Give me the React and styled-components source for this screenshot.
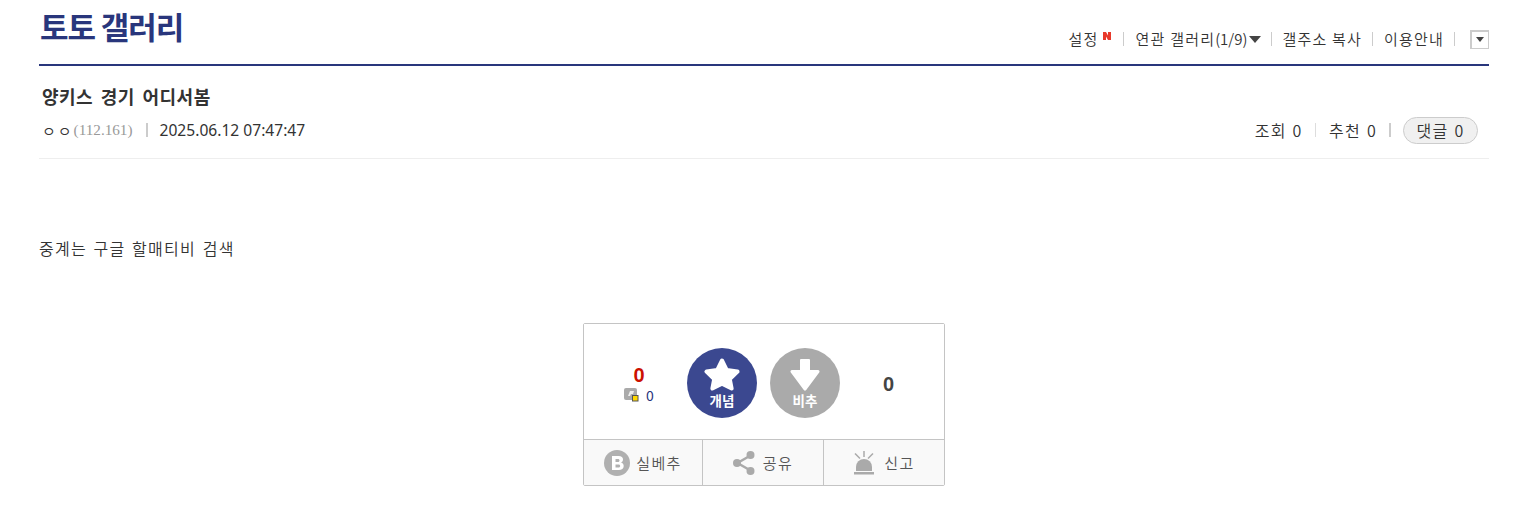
import React from 'react';
import styled, { createGlobalStyle } from 'styled-components';

const GlobalStyle = createGlobalStyle`
  html, body {
    margin: 0;
    padding: 0;
    background: #fff;
    font-family: "Noto Sans CJK KR", "Liberation Sans", sans-serif;
    color: #333;
  }
`;

const Page = styled.div`
  width: 1450px;
  margin-left: 39px;
  height: 532px;
  overflow: hidden;
`;

const Head = styled.header`
  height: 64px;
  border-bottom: 2px solid #29367c;
  display: flex;
  justify-content: space-between;
`;

const GalleryTitle = styled.h2`
  margin: 0;
  padding: 6px 0 0 1px;
  font-size: 31px;
  line-height: 40px;
  font-weight: 700;
  letter-spacing: -1.07px;
  color: #29367c;
`;

const HeadMenu = styled.nav`
  display: flex;
  align-items: center;
  height: 20px;
  margin-top: 29px;
  font-size: 15px;
  font-weight: 350;
  letter-spacing: 1.2px;
  color: #333;
`;

const MenuItem = styled.span`
  display: inline-flex;
  align-items: center;
  line-height: 20px;
  white-space: pre;
`;

const Paren = styled.span`
  font-size: 15px;
  letter-spacing: 0;
`;

const Sep = styled.i`
  display: block;
  width: ${(p) => p.$w || 1}px;
  height: ${(p) => p.$h || 14}px;
  margin: 0 ${(p) => p.$r ?? 11}px 0 ${(p) => p.$l ?? 11}px;
  background: ${(p) => p.$color || '#ccc'};
`;

const Caret = styled.i`
  display: block;
  width: 0;
  height: 0;
  margin-left: 2px;
  border-left: 6px solid transparent;
  border-right: 6px solid transparent;
  border-top: 7px solid #444;
`;

const ToggleBox = styled.button`
  width: 19px;
  height: 19px;
  margin-left: 4px;
  padding: 0;
  display: flex;
  align-items: center;
  justify-content: center;
  background: #fff;
  border: 1px solid #ccc;
  border-width: 2px 1px 1px 2px;
`;

const SmallCaret = styled.i`
  display: block;
  width: 0;
  height: 0;
  border-left: 4px solid transparent;
  border-right: 4px solid transparent;
  border-top: 5px solid #444;
`;

const PostHead = styled.section`
  height: 92px;
  border-bottom: 1px solid #eee;
  padding: 0 11px 0 3px;
`;

const PostTitle = styled.h3`
  margin: 0;
  padding-top: 18px;
  font-size: 18px;
  line-height: 24px;
  font-weight: 700;
  letter-spacing: 0.5px;
  word-spacing: 3px;
  color: #333;
`;

const PostInfo = styled.div`
  display: flex;
  justify-content: space-between;
  align-items: center;
  height: 26px;
  margin-top: 9px;
  font-size: 14px;
`;

const InfoSide = styled.div`
  display: flex;
  align-items: center;
`;

const Writer = styled.span`
  font-size: 15px;
  font-weight: 350;
  letter-spacing: 2px;
  color: #333;
`;

const Ip = styled.span`
  font-family: "Liberation Serif", serif;
  font-size: 15.2px;
  color: #999;
`;

const DateText = styled.span`
  font-family: "Noto Sans", sans-serif;
  font-size: 15.6px;
  color: #333;
`;

const Stat = styled.span`
  font-size: 16px;
  font-weight: 350;
  letter-spacing: 1.28px;
  word-spacing: 1px;
  color: #333;
`;

const CommentPill = styled.span`
  display: inline-flex;
  align-items: center;
  justify-content: center;
  box-sizing: border-box;
  width: 75px;
  height: 27px;
  border: 1px solid #ccc;
  border-radius: 14px;
  background: #f0f0f0;
  font-size: 16px;
  font-weight: 350;
  letter-spacing: 1.28px;
  word-spacing: 1px;
  color: #333;
`;

const Body = styled.p`
  margin: 0;
  padding-top: 77px;
  font-size: 16px;
  font-weight: 350;
  line-height: 24px;
  letter-spacing: 1.28px;
  word-spacing: 1.7px;
  color: #333;
`;

const VoteBox = styled.div`
  box-sizing: border-box;
  width: 362px;
  height: 163px;
  margin: 63px 0 0 544px;
  border: 1px solid #c4c4c4;
  border-radius: 2px;
`;

const VoteTop = styled.div`
  box-sizing: border-box;
  height: 116px;
  padding-top: 3px;
  display: grid;
  grid-template-columns: 90px 70px 70px 1fr;
  column-gap: 13px;
  align-items: center;
  background: #fff;
  border-bottom: 1px solid #c4c4c4;
`;

const Count = styled.div`
  display: flex;
  flex-direction: column;
  align-items: center;
  padding: ${(p) => p.$pt || 0}px ${(p) => p.$pr || 0}px 0 ${(p) => p.$pl || 0}px;
`;

const Num = styled.strong`
  font-family: "Liberation Sans", sans-serif;
  font-size: 20px;
  line-height: 24px;
  color: ${(p) => p.$color};
`;

const FixCount = styled.span`
  display: flex;
  align-items: center;
  gap: 7px;
  font-size: 14px;
  line-height: 16px;
  color: #29367c;
`;

const Circle = styled.button`
  width: 70px;
  height: 70px;
  padding: 0;
  border: 0;
  border-radius: 50%;
  background: ${(p) => p.$bg};
  color: #fff;
  display: flex;
  flex-direction: column;
  align-items: center;
  font-family: inherit;
  font-size: 13.5px;
  font-weight: 700;
  line-height: 16px;
`;

const CircleIcon = styled.svg`
  display: block;
  margin-top: 10px;
  margin-bottom: 1px;
`;

const VoteBottom = styled.div`
  display: grid;
  grid-template-columns: 118px 121px 1fr;
  height: 45px;
  background: #f9f9f9;
`;

const BottomBtn = styled.div`
  display: flex;
  align-items: center;
  justify-content: center;
  gap: ${(p) => p.$gap || 6}px;
  font-size: 15px;
  font-weight: 350;
  letter-spacing: 1.4px;
  color: #555;
  border-left: ${(p) => (p.$first ? '0' : '1px solid #c4c4c4')};
`;

export default function App() {
  return (
    <>
      <GlobalStyle />
      <Page>
        <Head>
          <GalleryTitle>토토 갤러리</GalleryTitle>
          <HeadMenu>
            <MenuItem>
              설정
              <svg width="8" height="8" viewBox="0 0 8 8" style={{ marginLeft: 4, marginTop: -6 }}>
                <path d="M0 0h3l2 3.500V0h3v8H5L3 4.500V8H0z" fill="#e8392b" />
              </svg>
            </MenuItem>
            <Sep $l={12} $r={12} />
            <MenuItem>
              연관 갤러리<Paren>(1/9)</Paren>
              <Caret />
            </MenuItem>
            <Sep $l={10} $r={10} />
            <MenuItem>갤주소 복사</MenuItem>
            <Sep $l={10} />
            <MenuItem>이용안내</MenuItem>
            <Sep $l={10} />
            <ToggleBox>
              <SmallCaret />
            </ToggleBox>
          </HeadMenu>
        </Head>

        <PostHead>
          <PostTitle>양키스 경기 어디서봄</PostTitle>
          <PostInfo>
            <InfoSide>
              <Writer>ㅇㅇ</Writer>
              <Ip>(112.161)</Ip>
              <Sep $w={2} $l={13} $r={12} />
              <DateText>2025.06.12 07:47:47</DateText>
            </InfoSide>
            <InfoSide>
              <Stat>조회 0</Stat>
              <Sep $l={12.5} $r={13} $color="#ddd" />
              <Stat>추천 0</Stat>
              <Sep $w={2} $l={12} $r={12} />
              <CommentPill>댓글 0</CommentPill>
            </InfoSide>
          </PostInfo>
        </PostHead>

        <Body>중계는 구글 할매티비 검색</Body>

        <VoteBox>
          <VoteTop>
            <Count $pl={20}>
              <Num $color="#cc1100">0</Num>
              <FixCount>
                <svg width="15" height="14" viewBox="0 0 15 14">
                  <rect x="0" y="0" width="13" height="12" rx="2" fill="#aaa" />
                  <path d="M4 8l2-5h4l-1 3H7l-1 2z" fill="#eee" />
                  <rect x="8.500" y="7.500" width="5.500" height="5.500" fill="#ffd800" stroke="#555" />
                </svg>
                0
              </FixCount>
            </Count>
            <Circle $bg="#3b4890">
              <CircleIcon width="36" height="33" viewBox="0 0 36 33">
                <path
                  d="M18 2.500l4.800 9.600 10.700 1.500-7.700 7.500 1.800 9.400-9.600-4.900-9.600 4.900 1.800-9.400-7.700-7.500 10.700-1.500z"
                  fill="#fff"
                  stroke="#fff"
                  strokeWidth="4"
                  strokeLinejoin="round"
                />
              </CircleIcon>
              개념
            </Circle>
            <Circle $bg="#aaaaaa">
              <CircleIcon width="30" height="33" viewBox="0 0 30 33">
                <path
                  d="M11 1h8a1 1 0 0 1 1 1v10h8a1.500 1.500 0 0 1 1.200 2.400L16.200 32a1.500 1.500 0 0 1-2.400 0L.8 14.400A1.500 1.500 0 0 1 2 12h8V2a1 1 0 0 1 1-1z"
                  fill="#fff"
                />
              </CircleIcon>
              비추
            </Circle>
            <Count $pr={20} $pt={2}>
              <Num $color="#444">0</Num>
            </Count>
          </VoteTop>
          <VoteBottom>
            <BottomBtn $first>
              <svg width="26" height="26" viewBox="0 0 26 26">
                <circle cx="13" cy="13" r="13" fill="#b0b0b0" />
                <path
                  fillRule="evenodd"
                  d="M8 6h6.500c3 0 4.500 1.500 4.500 3.500 0 1.500-.8 2.500-2 3 1.700.4 2.700 1.600 2.700 3.500 0 2.500-2 4-5 4H8zM11.500 9v3h2.500c1 0 1.500-.6 1.500-1.500S15 9 14 9zM11.500 14.500V17.500h3c1 0 1.700-.6 1.700-1.500s-.7-1.500-1.700-1.500z"
                  fill="#fff"
                />
              </svg>
              실베추
            </BottomBtn>
            <BottomBtn $gap={8}>
              <svg width="22" height="24" viewBox="0 0 22 24">
                <path d="M17.500 4.500L4.500 12l13 7.500" fill="none" stroke="#aaa" strokeWidth="2.500" />
                <circle cx="17.500" cy="4" r="4" fill="#aaa" />
                <circle cx="4" cy="12" r="4" fill="#aaa" />
                <circle cx="17.500" cy="20" r="4" fill="#aaa" />
              </svg>
              공유
            </BottomBtn>
            <BottomBtn $gap={9}>
              <svg width="22" height="24" viewBox="0 0 22 24">
                <path d="M3 20v-4a8 8 0 0 1 16 0v4z" fill="#aaa" />
                <rect x="1" y="21" width="20" height="2.500" fill="#aaa" />
                <path d="M11 0v6M2 2.500l5 5M20 2.500l-5 5" stroke="#aaa" strokeWidth="1.500" fill="none" />
              </svg>
              신고
            </BottomBtn>
          </VoteBottom>
        </VoteBox>
      </Page>
    </>
  );
}
